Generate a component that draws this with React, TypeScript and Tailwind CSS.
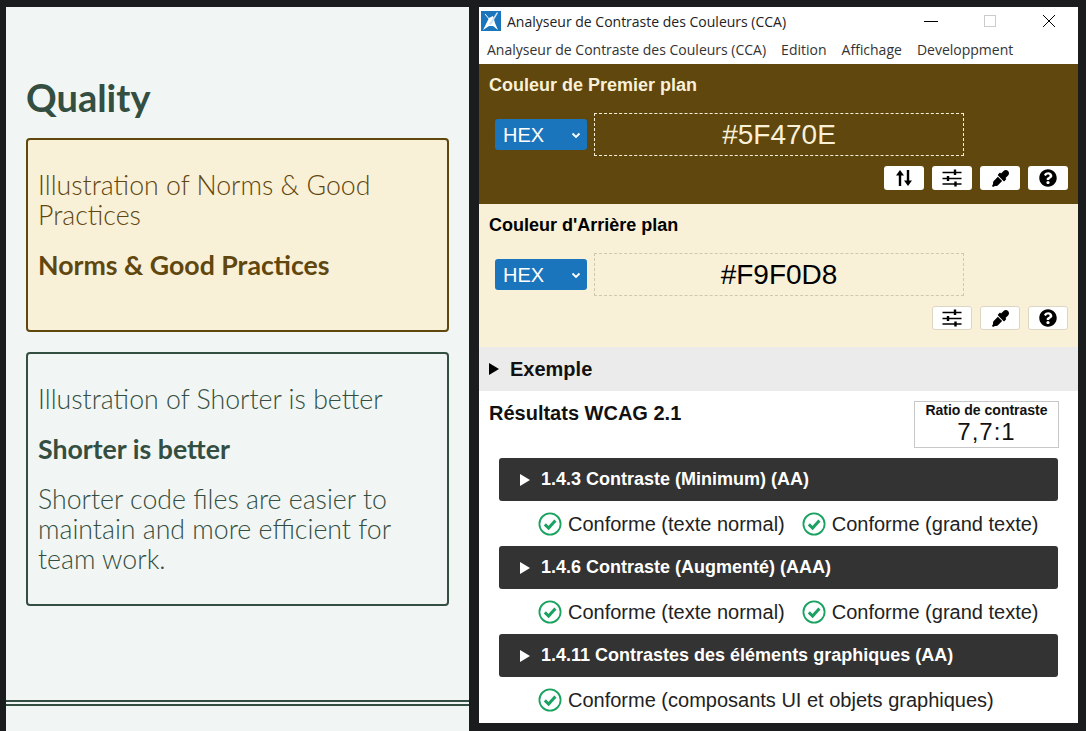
import React from 'react';
import { FaEyeDropper, FaQuestionCircle } from 'react-icons/fa';

const SwapIcon = () => (
  <svg width="18" height="18" viewBox="0 0 18 18" fill="#000">
    <path d="M5 1 L9 6.5 H6.2 V17 H3.8 V6.5 H1 Z" />
    <path d="M13 17 L9 11.5 H11.8 V1 H14.2 V11.5 H17 Z" />
  </svg>
);

const SlidersIcon = () => (
  <svg width="20" height="18" viewBox="0 0 20 18" fill="none" stroke="#000" strokeWidth="1.6">
    <path d="M0.5 3.5 H19.5 M0.5 9.5 H19.5 M0.5 15 H19.5" />
    <path d="M13 0.5 V6 M6 7 V12 M13.5 12.5 V17.5" strokeWidth="2.4" />
  </svg>
);

const Logo = () => (
  <svg width="20" height="20" viewBox="0 0 20 20">
    <rect width="20" height="20" fill="#1b75bc" />
    <path d="M2 19 L8 7 L12 5 L14 12 L17 19 L12 15 L8 15 Z" fill="#fff" />
    <path d="M8 13 L16 1 L17 2 L10 14 Z" fill="#cfe3f5" />
    <path d="M4 3 L9 9" stroke="#fff" strokeWidth="1" />
  </svg>
);

const CheckIcon = () => (
  <svg width="24" height="24" viewBox="0 0 24 24" className="shrink-0">
    <circle cx="12" cy="12" r="10.6" fill="#fff" stroke="#1aa260" strokeWidth="1.8" />
    <path d="M6.8 12.4 L10.6 16 L17.4 8.6" fill="none" stroke="#1aa260" strokeWidth="3" />
  </svg>
);

const Caret = ({ light }: { light?: boolean }) => (
  <span
    className={`w-0 h-0 border-y-[6px] border-y-transparent border-l-[10px] ${light ? 'border-l-white' : 'border-l-black'}`}
  />
);

const ToolButton = ({ children, bordered }: { children: React.ReactNode; bordered?: boolean }) => (
  <button className={`w-10 h-6 bg-white rounded-[3px] flex items-center justify-center ${bordered ? 'border border-[#dcd6c4]' : ''}`}>
    {children}
  </button>
);

const ColorSection = ({
  title,
  value,
  dark,
  showSwap,
  height,
}: {
  title: string;
  value: string;
  dark?: boolean;
  showSwap?: boolean;
  height: string;
}) => (
  <section className={`${height} px-[10px] ${dark ? 'bg-[#5F470E] text-[#F9F0D8]' : 'bg-[#F9F0D8] text-black'}`}>
    <h2 className="text-[18px] font-bold leading-[21px] pt-[11px]">{title}</h2>
    <div className="flex items-center gap-[7px] mt-[17px] ml-[6px]">
      <div className="w-[92px] h-[31px] bg-[#1b75bc] rounded-[3px] flex items-center justify-between pl-[8px] pr-[5px] text-white text-[20px]">
        HEX
        <svg width="12" height="12" viewBox="0 0 12 12" fill="none" stroke="#fff" strokeWidth="1.8">
          <path d="M2.5 4.5 L6 8 L9.5 4.5" />
        </svg>
      </div>
      <div
        className={`w-[370px] h-[43px] border border-dashed flex items-center justify-center text-[28px] ${dark ? 'border-[#F9F0D8]' : 'border-[#cfc8b0]'}`}
      >
        {value}
      </div>
    </div>
    <div className="flex justify-end gap-2 mt-[10px] text-black pr-[-1px]">
      {showSwap && (
        <ToolButton>
          <SwapIcon />
        </ToolButton>
      )}
      <ToolButton bordered={!dark}>
        <SlidersIcon />
      </ToolButton>
      <ToolButton bordered={!dark}>
        <FaEyeDropper size={17} />
      </ToolButton>
      <ToolButton bordered={!dark}>
        <FaQuestionCircle size={18} />
      </ToolButton>
    </div>
  </section>
);

const Criterion = ({ title, results }: { title: string; results: string[] }) => (
  <div>
    <div className="h-[43px] bg-[#333333] rounded-[3px] flex items-center gap-[11px] pl-[21px] text-white text-[18px] font-bold">
      <Caret light />
      {title}
    </div>
    <div className="h-[45px] flex items-center gap-[17px] pl-[39px] text-[20px] text-[#222]">
      {results.map((r) => (
        <span key={r} className="flex items-center gap-[6px]">
          <CheckIcon />
          {r}
        </span>
      ))}
    </div>
  </div>
);

export default function App() {
  return (
    <div className="w-[1086px] h-[731px] bg-[#1a1c1e] flex gap-[10px] pt-[7px] pl-[6px] overflow-hidden">
      {/* slide on the left */}
      <div className="w-[463px] h-[724px] bg-[#F1F6F4] font-['Lato',sans-serif]">
        <div className="px-[20px]">
          <h1 className="text-[38px] font-bold leading-[46px] text-[#344E41] pt-[67px]">Quality</h1>
          <div className="mt-[18px] h-[194px] border-2 border-[#5F470E] rounded-[4px] bg-[#F9F0D8] text-[#5F470E] px-[10px] pt-[30px] text-[26.7px] leading-[30px] font-light">
            <p>Illustration of Norms &amp; Good Practices</p>
            <p className="font-bold mt-[20px]">Norms &amp; Good Practices</p>
          </div>
          <div className="mt-[20px] h-[254px] border-2 border-[#344E41] rounded-[4px] text-[#344E41] px-[10px] pt-[30px] text-[26.7px] leading-[30px] font-light">
            <p>Illustration of Shorter is better</p>
            <p className="font-bold mt-[20px]">Shorter is better</p>
            <p className="mt-[20px]">Shorter code files are easier to maintain and more efficient for team work.</p>
          </div>
        </div>
        <div className="mt-[94px] border-t-[6px] border-double border-[#344E41]" />
      </div>

      {/* CCA window on the right */}
      <div className="w-[599px] h-[716px] bg-white font-['Liberation_Sans',sans-serif] flex flex-col">
        <header className="h-[28px] flex items-center font-['Open_Sans',sans-serif] text-[14px] text-[#222] pl-[2px]">
          <Logo />
          <span className="ml-[6px]">Analyseur de Contraste des Couleurs (CCA)</span>
          <div className="ml-auto flex items-center">
            <span className="w-[14px] h-px bg-black mr-[46px]" />
            <span className="w-[12px] h-[12px] border border-[#ccc] mr-[46px]" />
            <svg width="14" height="14" viewBox="0 0 14 14" stroke="#000" className="mr-[22px]">
              <path d="M1 1 L13 13 M13 1 L1 13" />
            </svg>
          </div>
        </header>
        <nav className="h-[29px] flex items-center gap-[15px] pl-[8px] font-['Open_Sans',sans-serif] text-[14px] text-[#333]">
          <span>Analyseur de Contraste des Couleurs (CCA)</span>
          <span>Edition</span>
          <span>Affichage</span>
          <span>Developpment</span>
        </nav>
        <ColorSection title="Couleur de Premier plan" value="#5F470E" dark showSwap height="h-[140px]" />
        <ColorSection title="Couleur d'Arrière plan" value="#F9F0D8" height="h-[143px]" />
        <div className="h-[44px] bg-[#ebebeb] flex items-center gap-[11px] pl-[10px] text-[20px] font-bold text-[#111]">
          <Caret />
          Exemple
        </div>
        <div className="flex justify-between pl-[10px] pr-[19px] pt-[10px]">
          <h2 className="text-[20px] font-bold leading-[24px] text-[#111]">Résultats WCAG 2.1</h2>
          <div className="w-[145px] h-[47px] border border-[#c8c8c8] flex flex-col items-center text-[#111]">
            <span className="text-[14px] leading-[16px] font-bold">Ratio de contraste</span>
            <span className="text-[24px] leading-[28px] tracking-[1px]">7,7:1</span>
          </div>
        </div>
        <div className="mt-[10px] px-[20px]">
          <Criterion title="1.4.3 Contraste (Minimum) (AA)" results={['Conforme (texte normal)', 'Conforme (grand texte)']} />
          <Criterion title="1.4.6 Contraste (Augmenté) (AAA)" results={['Conforme (texte normal)', 'Conforme (grand texte)']} />
          <Criterion title="1.4.11 Contrastes des éléments graphiques (AA)" results={['Conforme (composants UI et objets graphiques)']} />
        </div>
      </div>
    </div>
  );
}
